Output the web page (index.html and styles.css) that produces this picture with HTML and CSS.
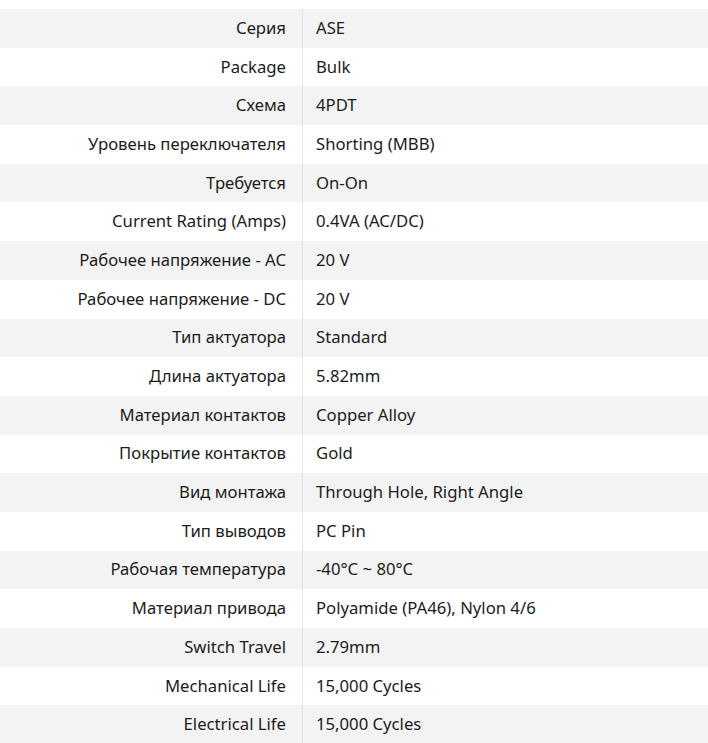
FILE: index.html
```html
<!DOCTYPE html>
<html lang="ru">
<head>
<meta charset="utf-8">
<link rel="stylesheet" href="styles.css">
</head>
<body>
<table class="specs">
<tbody>
<tr><th>Серия</th><td>ASE</td></tr>
<tr><th>Package</th><td>Bulk</td></tr>
<tr><th>Схема</th><td>4PDT</td></tr>
<tr><th>Уровень переключателя</th><td>Shorting (MBB)</td></tr>
<tr><th>Требуется</th><td>On-On</td></tr>
<tr><th>Current Rating (Amps)</th><td>0.4VA (AC/DC)</td></tr>
<tr><th>Рабочее напряжение - AC</th><td>20 V</td></tr>
<tr><th>Рабочее напряжение - DC</th><td>20 V</td></tr>
<tr><th>Тип актуатора</th><td>Standard</td></tr>
<tr><th>Длина актуатора</th><td>5.82mm</td></tr>
<tr><th>Материал контактов</th><td>Copper Alloy</td></tr>
<tr><th>Покрытие контактов</th><td>Gold</td></tr>
<tr><th>Вид монтажа</th><td>Through Hole, Right Angle</td></tr>
<tr><th>Тип выводов</th><td>PC Pin</td></tr>
<tr><th>Рабочая температура</th><td>-40°C ~ 80°C</td></tr>
<tr><th>Материал привода</th><td>Polyamide (PA46), Nylon 4/6</td></tr>
<tr><th>Switch Travel</th><td>2.79mm</td></tr>
<tr><th>Mechanical Life</th><td>15,000 Cycles</td></tr>
<tr><th>Electrical Life</th><td>15,000 Cycles</td></tr>
</tbody>
</table>
</body>
</html>
```
FILE: styles.css
```css
html, body {
  margin: 0;
  padding: 0;
  background: #ffffff;
}
body {
  padding-top: 9px;
  font-family: "Noto Sans", "Open Sans", sans-serif;
  font-size: 16.7px;
  color: #1c1c1c;
}
.specs {
  width: 708px;
  border-collapse: collapse;
  border-spacing: 0;
}
.specs tr {
  height: 38.7px;
}
.specs tr:nth-child(odd) {
  background: #f3f3f3;
}
.specs th,
.specs td {
  padding: 0 0 1px 0;
  vertical-align: middle;
  font-weight: 400;
  line-height: 20px;
}
.specs th {
  width: 286px;
  padding-right: 16px;
  text-align: right;
}
.specs td {
  padding-left: 13px;
  text-align: left;
  border-left: 1px solid #e4e4e4;
}
```
